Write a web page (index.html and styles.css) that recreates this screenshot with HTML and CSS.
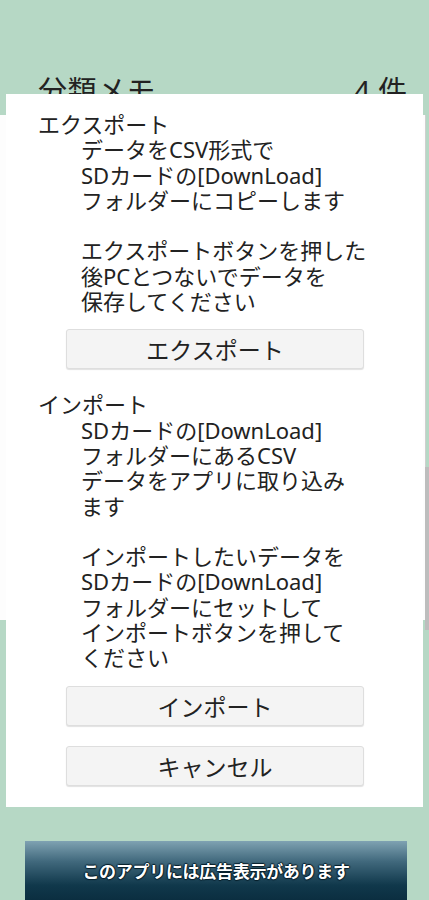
FILE: index.html
```html
<!DOCTYPE html>
<html lang="ja">
<head>
    <meta charset="UTF-8">
    <meta name="viewport" content="width=device-width, initial-scale=1.0">
    <title>分類メモ</title>
    <link rel="stylesheet" href="styles.css">
</head>
<body>
    <div class="screen">
        <div class="title-bar">
            <span class="title">分類メモ</span>
            <span class="count">4 件</span>
        </div>
        <div class="list">
            <div class="scroll-thumb"></div>
        </div>
        <div class="ad-banner">このアプリには広告表示があります</div>

        <div class="dialog">
            <div class="section">
                <div class="section-title">エクスポート</div>
                <div class="section-text">
                    データをCSV形式で<br>
                    SDカードの[DownLoad]<br>
                    フォルダーにコピーします<br>
                    <br>
                    エクスポートボタンを押した<br>
                    後PCとつないでデータを<br>
                    保存してください
                </div>
                <button class="dialog-btn" type="button">エクスポート</button>
            </div>
            <div class="section import">
                <div class="section-title">インポート</div>
                <div class="section-text">
                    SDカードの[DownLoad]<br>
                    フォルダーにあるCSV<br>
                    データをアプリに取り込み<br>
                    ます<br>
                    <br>
                    インポートしたいデータを<br>
                    SDカードの[DownLoad]<br>
                    フォルダーにセットして<br>
                    インポートボタンを押して<br>
                    ください
                </div>
                <button class="dialog-btn" type="button">インポート</button>
                <button class="dialog-btn cancel" type="button">キャンセル</button>
            </div>
        </div>
    </div>
</body>
</html>
```

FILE: styles.css
```css
body {
    font-family: "Noto Sans", "Noto Sans CJK JP", sans-serif;
    margin: 0;
    padding: 0;
    background-color: #b6d8c5;
}

.screen {
    position: relative;
    display: flex;
    flex-direction: column;
    height: 900px;
    overflow: hidden;
}

.title-bar {
    display: flex;
    justify-content: space-between;
    align-items: flex-start;
    height: 115px;
    box-sizing: border-box;
    padding: 74px 22px 0 38px;
    color: #222;
    font-size: 29px;
    line-height: 34px;
}

.title {
    letter-spacing: 0.5px;
}

.list {
    position: relative;
    height: 505px;
    background-color: #fdfdfd;
    border-right: 1px solid #cfcfcf;
    margin-right: 3px;
}

.scroll-thumb {
    position: absolute;
    right: -4px;
    top: 352px;
    width: 4px;
    height: 163px;
    background-color: #bdbdbd;
}

.ad-banner {
    margin: auto 22px 0 25px;
    height: 59px;
    display: flex;
    align-items: center;
    justify-content: center;
    background: linear-gradient(to bottom, #7fa2b2 0%, #40687c 35%, #10384b 75%, #0b2e40 100%);
    color: #fff;
    font-family: "Noto Sans CJK JP", sans-serif;
    font-size: 17px;
    font-weight: bold;
    letter-spacing: -0.3px;
    text-shadow: 1px 0 1px #071e2a, -1px 0 1px #071e2a, 0 1px 1px #071e2a, 0 -1px 1px #071e2a;
}

/* dialog over the page */
.dialog {
    position: absolute;
    top: 94px;
    left: 6px;
    right: 6px;
    box-sizing: border-box;
    padding: 18px 0 21px;
    background-color: #fff;
    color: #222;
    font-size: 22px;
    line-height: 25.3px;
}

.section-title {
    padding-left: 32px;
}

.section-text {
    padding-left: 75px;
}

.import {
    margin-top: 23px;
}

.dialog-btn {
    display: flex;
    align-items: center;
    justify-content: center;
    width: 298px;
    height: 40px;
    margin: 15px 0 0 60px;
    padding: 0;
    background-color: #f4f4f4;
    border: 1px solid #dedede;
    border-radius: 3px;
    box-shadow: 0 1px 1px rgba(0, 0, 0, 0.12);
    color: #222;
    font-family: "Noto Sans", "Noto Sans CJK JP", sans-serif;
    font-size: 23px;
}

.cancel {
    margin-top: 20px;
}
```
